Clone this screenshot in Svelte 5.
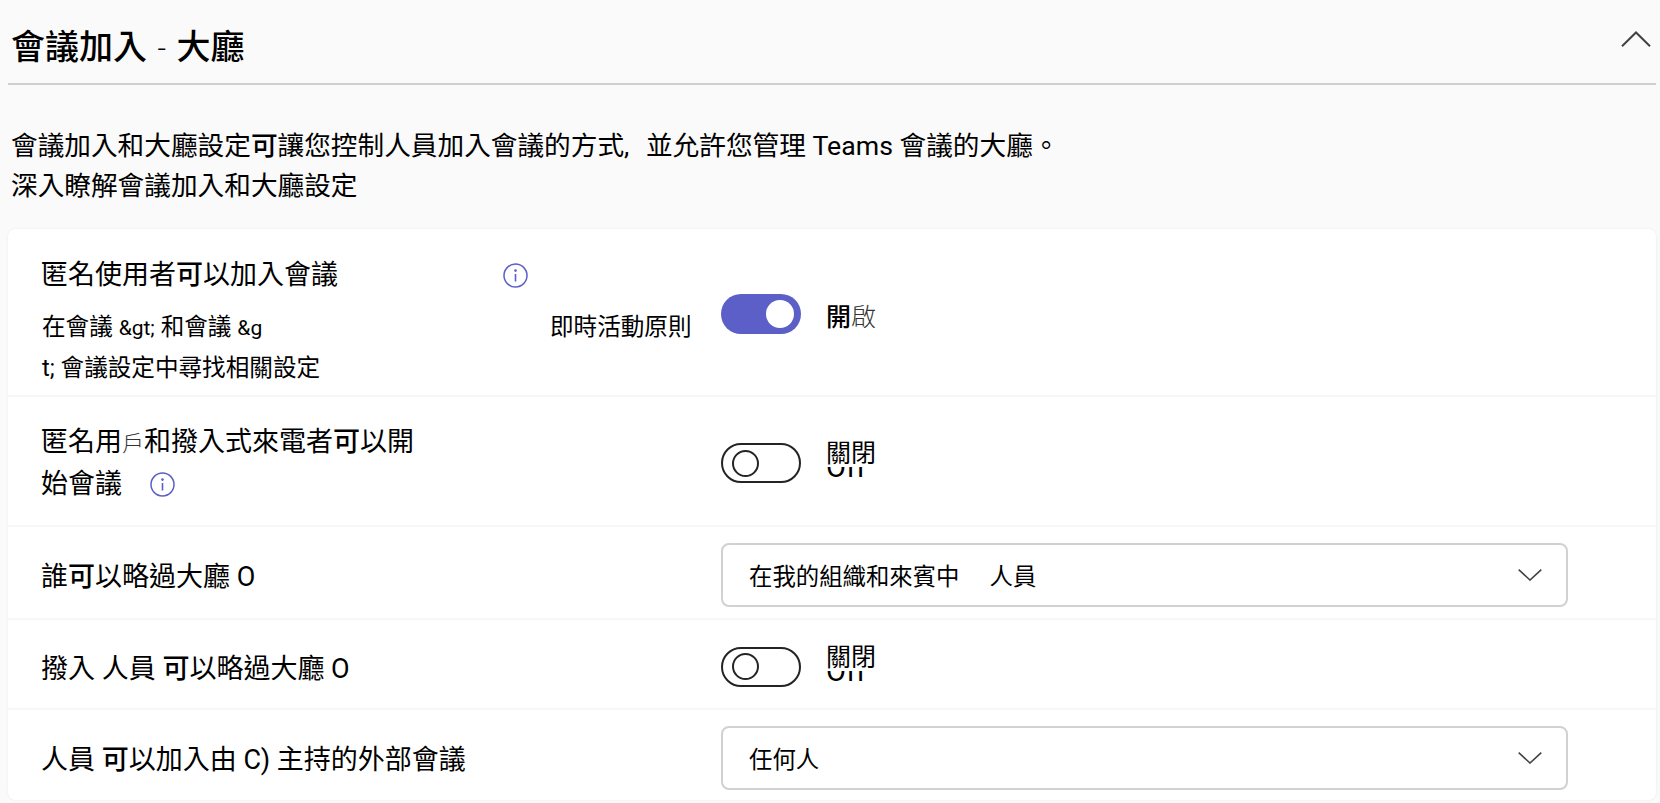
<script>
  // rows are plain markup, the repeated bits live in snippets below
</script>

{#snippet info()}
  <svg class="info" viewBox="0 0 25 25" aria-hidden="true">
    <circle cx="12.5" cy="12.5" r="11.5" fill="none" stroke="#5b5fc7" stroke-width="1.5" />
    <circle cx="12.5" cy="7.6" r="1.3" fill="#5b5fc7" />
    <path d="M12.5 11v7.5" stroke="#5b5fc7" stroke-width="1.6" fill="none" />
  </svg>
{/snippet}

{#snippet offSwitch()}
  <div class="switch-wrap">
    <span class="toggle off"><span class="knob"></span></span>
    <span class="state off-state">
      <span class="ghost">Off</span>
      <span class="state-text">關閉</span>
    </span>
  </div>
{/snippet}

{#snippet chevron()}
  <svg class="chevron" viewBox="0 0 24 12" aria-hidden="true">
    <path d="M0.7 0.7 L12 11 L23.3 0.7" fill="none" stroke="#424242" stroke-width="1.6" />
  </svg>
{/snippet}

<div class="page">
  <header class="head">
    <h1>會議加入 <span class="dash">-</span> 大廳</h1>
    <svg class="collapse" viewBox="0 0 30 16" aria-hidden="true">
      <path d="M1 15.3 L15 1.5 L29 15.3" fill="none" stroke="#424242" stroke-width="2" />
    </svg>
  </header>

  <p class="intro">
    會議加入和大廳設定<b>可</b>讓您控制人員加入會議的方式<span class="comma">,</span> 並允許您管理 Teams 會議的大廳。<br />
    深入瞭解會議加入和大廳設定
  </p>

  <section class="card">
    <div class="row row-first">
      <div class="label">
        <div class="heading">
          <span class="heading-text">匿名使用者<b>可</b>以加入會議</span>
          {@render info()}
        </div>
        <div class="sub">
          <span class="sub-text">在會議 <span class="latin">&amp;gt;</span> 和會議 <span class="latin">&amp;g</span><br />t; 會議設定中尋找相關設定</span>
          <span class="sub-policy">即時活動原則</span>
        </div>
      </div>
      <div class="switch-wrap">
        <span class="toggle on"><span class="knob"></span></span>
        <span class="state on-state"><b>開</b><span class="thin">啟</span></span>
      </div>
    </div>

    <div class="row row-second">
      <div class="label">
        匿名用<span class="thin small-char">戶</span>和撥入式來電者<b>可</b>以開<br />
        <span class="with-info">始會議 {@render info()}</span>
      </div>
      {@render offSwitch()}
    </div>

    <div class="row row-select">
      <div class="label">誰<b>可</b>以略過大廳 O</div>
      <div class="select">
        <span>在我的組織和來賓中<span class="people">人員</span></span>
        {@render chevron()}
      </div>
    </div>

    <div class="row row-plain">
      <div class="label">撥入 人員 <b>可</b>以略過大廳 O</div>
      {@render offSwitch()}
    </div>

    <div class="row row-last">
      <div class="label">人員 <b>可</b>以加入由 C) 主持的外部會議</div>
      <div class="select">
        <span>任何人</span>
        {@render chevron()}
      </div>
    </div>
  </section>
</div>

<style>
  :global(body) {
    background: #fafafa;
    color: #000;
    font-family: Roboto, "Noto Sans CJK TC", sans-serif;
  }

  .page {
    padding: 0 4px 0 8px;
    height: 803px;
    box-sizing: border-box;
    overflow: hidden;
  }

  .head {
    height: 83px;
    border-bottom: 2px solid #cfcfcf;
    display: flex;
    justify-content: space-between;
    align-items: center;
    padding: 0 5px 0 3px;
  }

  h1 {
    margin: 12px 0 0;
    font-size: 34px;
    font-weight: 500;
    line-height: 50px;
  }

  .dash {
    font-weight: 300;
    font-size: 30px;
    margin: 0 2px;
  }

  .collapse {
    width: 30px;
    height: 16px;
    margin-bottom: 6px;
  }

  .intro {
    margin: 41px 0 23px 3px;
    font-size: 26.67px;
    line-height: 40px;
  }

  .comma {
    margin-right: 10px;
  }

  b {
    font-weight: 500;
  }

  .card {
    background: #fff;
    border-radius: 8px;
    box-shadow: 0 0 3px rgba(0, 0, 0, 0.06);
    height: 571px;
    overflow: hidden;
  }

  .row {
    display: grid;
    grid-template-columns: 713px 847px;
    align-items: center;
    box-sizing: border-box;
    border-bottom: 2px solid #f7f7f7;
  }

  .row .label {
    padding-left: 33px;
  }

  .row-first {
    height: 168px;
    padding-top: 3px;
  }

  .row-second {
    height: 130px;
    padding-top: 4px;
  }

  .row-select {
    height: 93px;
    padding-top: 5px;
  }

  .row-plain {
    height: 90px;
    padding-top: 5px;
  }

  .row-last {
    height: 90px;
    padding-top: 6px;
    border-bottom: 0;
  }

  .label {
    font-size: 27px;
    line-height: 40px;
  }

  .row-select .label,
  .row-plain .label,
  .row-last .label {
    padding-top: 4px;
  }

  .row-first .label {
    align-self: start;
    padding-top: 23px;
  }

  .heading {
    display: flex;
    align-items: center;
    height: 40px;
  }

  .heading-text {
    width: 462px;
  }

  .info {
    width: 25px;
    height: 25px;
    flex: none;
  }

  .with-info {
    display: inline-flex;
    align-items: center;
    gap: 28px;
  }

  .sub {
    display: flex;
    margin-top: 12px;
    font-size: 23.6px;
    line-height: 40px;
  }

  .sub-text {
    width: 508px;
    margin-left: 1px;
  }

  .latin {
    font-size: 21px;
  }

  .switch-wrap {
    display: flex;
    align-items: center;
    gap: 25px;
  }

  .toggle {
    width: 80px;
    height: 40px;
    border-radius: 20px;
    box-sizing: border-box;
    display: flex;
    align-items: center;
    flex: none;
  }

  .toggle.on {
    background: #5b5fc7;
    justify-content: flex-end;
    padding-right: 7px;
  }

  .toggle.on .knob {
    width: 28px;
    height: 28px;
    background: #fff;
    border-radius: 50%;
  }

  .toggle.off {
    border: 2px solid #242424;
    padding-left: 9px;
  }

  .toggle.off .knob {
    width: 27px;
    height: 27px;
    box-sizing: border-box;
    border: 2px solid #242424;
    border-radius: 50%;
  }

  .state {
    font-size: 25px;
    line-height: 32px;
  }

  .on-state {
    margin-top: 8px;
  }

  .thin {
    font-weight: 300;
    color: #333;
  }

  .small-char {
    font-size: 22px;
  }

  /* the label sits above a leftover "Off" in the original */
  .off-state {
    position: relative;
    width: 50px;
    height: 32px;
    margin-top: -14px;
  }

  .ghost {
    position: absolute;
    left: 0;
    top: 11px;
    font-size: 29px;
  }

  .state-text {
    position: absolute;
    left: 0;
    top: 0;
    background: #fff;
    height: 27px;
    line-height: 27px;
  }

  .select {
    width: 847px;
    height: 64px;
    box-sizing: border-box;
    border: 2px solid #d1d1d1;
    border-radius: 8px;
    display: flex;
    align-items: center;
    justify-content: space-between;
    padding: 0 24px 0 26px;
    font-size: 23.4px;
  }

  .people {
    margin-left: 30px;
  }

  .chevron {
    width: 24px;
    height: 12px;
  }
</style>
